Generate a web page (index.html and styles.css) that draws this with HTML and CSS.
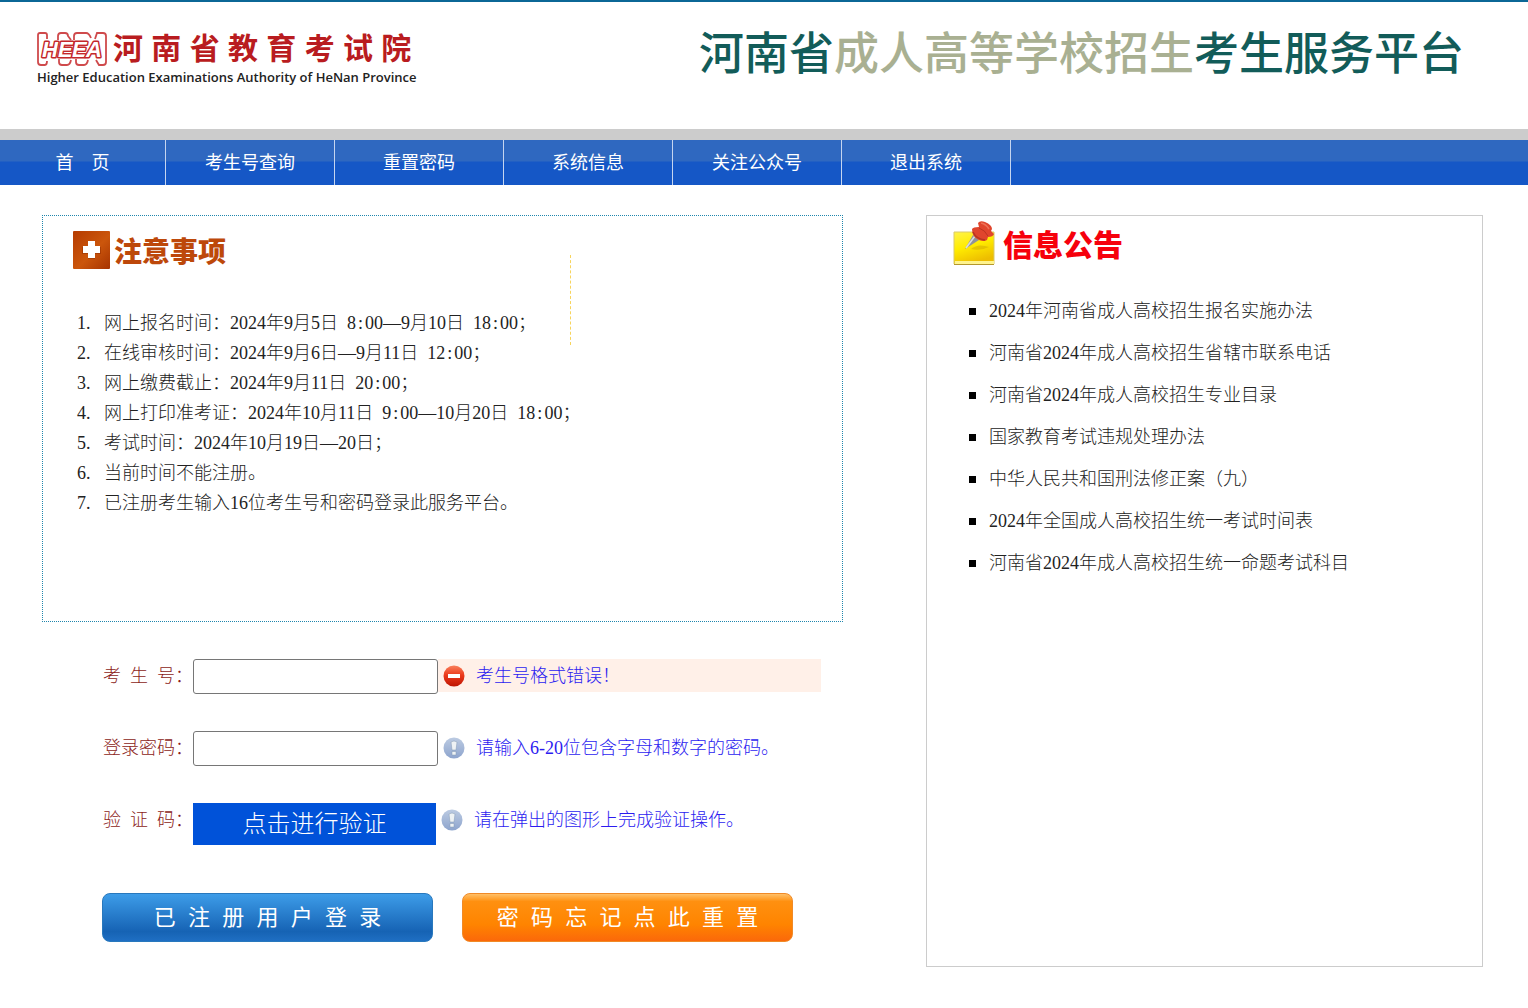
FILE: index.html
```html
<!DOCTYPE html>
<html lang="zh-CN">
<head>
<meta charset="utf-8">
<title>河南省成人高等学校招生考生服务平台</title>
<link rel="stylesheet" href="styles.css">
</head>
<body>
<header class="header">
  <div class="brand">
    <div class="brand-row">
      <svg class="brand-mark" viewBox="0 0 70 34" aria-label="HEEA">
        <g fill="none" stroke="#cf4a4c" stroke-width="1.8">
          <path d="M10 7V3Q10 1 8 1H3Q1 1 1 3V30Q1 33 4 33H8Q10 33 10 29"/>
          <path d="M58 7L60 1H66Q69 1 69 4V30Q69 33 66 33H62L59 28"/>
          <path d="M21 8V4Q21 1 24 1H28Q31 1 31 4L34 8M37 8V4Q37 1 40 1H49Q52 1 54 6M22 27V30Q22 33 25 33H30Q33 33 34 28M39 27V30Q39 33 42 33H47Q50 33 51 28"/>
        </g>
        <g class="brand-letters">
          <text x="5" y="25">H</text><text x="21" y="25">E</text><text x="35" y="25">E</text><text x="49" y="25">A</text>
        </g>
      </svg>
      <span class="brand-name">河 南 省 教 育 考 试 院</span>
    </div>
    <div class="brand-en">Higher Education Examinations Authority of HeNan Province</div>
  </div>
  <h1 class="title">河南省<span class="title-soft">成人高等学校招生</span>考生服务平台</h1>
</header>
<nav class="nav">
  <a href="#">首　页</a>
  <a href="#">考生号查询</a>
  <a href="#">重置密码</a>
  <a href="#">系统信息</a>
  <a href="#">关注公众号</a>
  <a href="#">退出系统</a>
</nav>
<main class="main">
  <div class="left">
    <section class="notice">
      <h2 class="notice-title">
        <svg class="notice-icon" viewBox="0 0 37 38" aria-hidden="true">
          <defs><linearGradient id="rust" x1="0" y1="0" x2="1" y2="1"><stop offset="0" stop-color="#b53b00"/><stop offset=".55" stop-color="#cb560c"/><stop offset="1" stop-color="#a63300"/></linearGradient></defs>
          <rect width="37" height="38" rx="1" fill="url(#rust)"/>
          <path d="M15 11h7v5h6v7h-6v5h-7v-5H9v-7h6z" fill="#8d2c00" opacity=".5"/>
          <path d="M15 10h7v5h5v7h-5v5h-7v-5h-5v-7h5z" fill="#fff"/>
        </svg>
        注意事项
      </h2>
      <ol class="notice-list">
        <li>网上报名时间：2024年9月5日&nbsp; 8<span class="colon">:</span>00—9月10日&nbsp; 18<span class="colon">:</span>00；</li>
        <li>在线审核时间：2024年9月6日—9月11日&nbsp; 12<span class="colon">:</span>00；</li>
        <li>网上缴费截止：2024年9月11日&nbsp; 20<span class="colon">:</span>00；</li>
        <li>网上打印准考证：2024年10月11日&nbsp; 9<span class="colon">:</span>00—10月20日&nbsp; 18<span class="colon">:</span>00；</li>
        <li>考试时间：2024年10月19日—20日；</li>
        <li>当前时间不能注册。</li>
        <li>已注册考生输入16位考生号和密码登录此服务平台。</li>
      </ol>
      <div class="divider"></div>
    </section>
    <form class="login">
      <div class="row">
        <label for="number">考&nbsp; 生&nbsp; 号：</label>
        <input id="number" type="text">
        <p class="tip tip-error">
          <svg class="tip-icon" viewBox="0 0 22 22" aria-hidden="true">
            <defs><linearGradient id="stop" x1="0" y1="0" x2="0" y2="1"><stop offset="0" stop-color="#f9805c"/><stop offset=".45" stop-color="#ec3a1c"/><stop offset="1" stop-color="#bd1503"/></linearGradient></defs>
            <circle cx="11" cy="11" r="10.5" fill="url(#stop)"/><rect x="5" y="9" width="12" height="4" fill="#fff"/>
          </svg>
          考生号格式错误！
        </p>
      </div>
      <div class="row">
        <label for="password">登录密码：</label>
        <input id="password" type="password">
        <p class="tip">
          <svg class="tip-icon" viewBox="0 0 22 22" aria-hidden="true">
            <defs><linearGradient id="info" x1="0" y1="0" x2="0" y2="1"><stop offset="0" stop-color="#bccbe2"/><stop offset="1" stop-color="#8da4cd"/></linearGradient></defs>
            <circle cx="11" cy="11" r="10.5" fill="url(#info)"/><path d="M8 5q3-2 6 0l-1 8H9zM9 14.500h4v3.500H9z" fill="#eef2f4" stroke="#8398b5" stroke-width=".5"/>
          </svg>
          请输入6-20位包含字母和数字的密码。
        </p>
      </div>
      <div class="row">
        <label for="verify">验&nbsp; 证&nbsp; 码：</label>
        <button id="verify" class="verify" type="button">点击进行验证</button>
        <p class="tip">
          <svg class="tip-icon" viewBox="0 0 22 22" aria-hidden="true">
            <circle cx="11" cy="11" r="10.5" fill="url(#info)"/><path d="M8 5q3-2 6 0l-1 8H9zM9 14.500h4v3.500H9z" fill="#eef2f4" stroke="#8398b5" stroke-width=".5"/>
          </svg>
          请在弹出的图形上完成验证操作。
        </p>
      </div>
      <div class="actions">
        <button class="action action-login" type="submit">已&nbsp; 注&nbsp; 册&nbsp; 用&nbsp; 户&nbsp; 登&nbsp; 录</button>
        <button class="action action-reset" type="button">密&nbsp; 码&nbsp; 忘&nbsp; 记&nbsp; 点&nbsp; 此&nbsp; 重&nbsp; 置</button>
      </div>
    </form>
  </div>
  <aside class="news">
    <h2 class="news-title">
      <svg class="news-icon" viewBox="0 0 44 46" aria-hidden="true">
        <defs><linearGradient id="note" x1="0" y1="0" x2=".4" y2="1"><stop offset="0" stop-color="#fff34a"/><stop offset=".5" stop-color="#ffec00"/><stop offset="1" stop-color="#edbd00"/></linearGradient></defs>
        <path d="M1 12H41V44H1Z" fill="url(#note)" stroke="#d9c96a"/>
        <path d="M2 41H41V44H2Z" fill="#fff48e"/>
        <path d="M1 44.500H41" stroke="#b5982c"/>
        <path d="M18 29Q25 23 36 27Q28 31 18 29Z" fill="#d0a900" opacity=".5"/>
        <path d="M12 29L20 15L26 20Z" fill="#8e9299"/><path d="M13 28L22 16" stroke="#d8dbe0" stroke-width="1.500"/>
        <path d="M19 9Q20 7 26 7L25 3Q27 0 32 2Q39 5 39 9L38 11L41 14Q40 17 35 17L34 20Q31 22 26 20Q19 17 19 9Z" fill="#e0452d"/>
        <path d="M26 8Q32 10 35 16" fill="none" stroke="#bc3320" stroke-width="1"/>
        <path d="M28 3Q33 4 36 9" fill="none" stroke="#ee7055" stroke-width="1.500"/>
        <path d="M20 12Q23 19 32 20" fill="none" stroke="#b53522" stroke-width="1.500"/>
      </svg>
      信息公告
    </h2>
    <ul class="news-list">
      <li><a href="#">2024年河南省成人高校招生报名实施办法</a></li>
      <li><a href="#">河南省2024年成人高校招生省辖市联系电话</a></li>
      <li><a href="#">河南省2024年成人高校招生专业目录</a></li>
      <li><a href="#">国家教育考试违规处理办法</a></li>
      <li><a href="#">中华人民共和国刑法修正案（九）</a></li>
      <li><a href="#">2024年全国成人高校招生统一考试时间表</a></li>
      <li><a href="#">河南省2024年成人高校招生统一命题考试科目</a></li>
    </ul>
  </aside>
</main>
</body>
</html>
```
FILE: styles.css
```css
* { box-sizing: border-box; }

body {
  margin: 0;
  background: #fff;
  color: #222;
  font-family: "Liberation Serif", "Noto Sans CJK SC", serif;
  font-size: 18px;
  font-weight: 300;
  line-height: 30px;
}

h1, h2, p, ol, ul { margin: 0; padding: 0; }
ol, ul { list-style: none; }
a { color: inherit; text-decoration: none; }
button, input { font: inherit; }

.header {
  display: flex;
  justify-content: space-between;
  align-items: flex-start;
  height: 140px;
  padding: 28px 64px 0 37px;
  border-top: 2px solid #0b6796;
  border-bottom: 11px solid #ccc;
}

.brand-row { display: flex; align-items: center; gap: 6px; height: 38px; }
.brand-mark { width: 70px; height: 34px; }
.brand-letters {
  fill: #fff;
  stroke: #c4282b;
  stroke-width: 3px;
  stroke-linejoin: round;
  paint-order: stroke;
  font-family: "Liberation Sans", sans-serif;
  font-size: 22px;
  font-style: italic;
  font-weight: 700;
}
.brand-name {
  color: #b91c20;
  font-family: "Liberation Sans", "Noto Sans CJK SC", sans-serif;
  font-size: 30px;
  font-weight: 700;
  white-space: nowrap;
}
.brand-en {
  color: #222;
  font-family: "Open Sans", sans-serif;
  font-size: 13px;
  font-weight: 600;
  line-height: 18px;
}
.title {
  color: #125c59;
  font-family: "Noto Sans CJK SC", sans-serif;
  font-size: 45px;
  font-weight: 500;
  line-height: 42px;
  white-space: nowrap;
}
.title-soft { color: #a9b092; }

.nav {
  display: flex;
  height: 45px;
  background: linear-gradient(#2f68c0 0 21px, #1557c6 22px 100%);
  color: #fff;
  font-weight: 400;
  line-height: 47px;
}
.nav a { width: 169px; border-right: 1px solid #c5d5f0; text-align: center; }
.nav a:first-child { width: 166px; }

.main {
  display: grid;
  grid-template-columns: 801fr 557fr;
  gap: 83px;
  padding: 30px 45px 41px 42px;
}

.notice {
  position: relative;
  height: 407px;
  padding: 16px 30px;
  border: 1px dotted #1f86ad;
}
.notice-title {
  display: flex;
  align-items: center;
  gap: 4px;
  height: 36px;
  color: #bd480a;
  font-family: "Noto Sans CJK SC", sans-serif;
  font-size: 28px;
  font-weight: 900;
}
.notice-icon { width: 37px; height: 38px; }
.notice-list { padding: 40px 0 0 31px; counter-reset: notice; }
.notice-list li { counter-increment: notice; }
.notice-list li::before {
  content: counter(notice) ".";
  display: inline-block;
  width: 27px;
  margin-left: -27px;
}
.colon { padding: 0 2px; }
.divider {
  position: absolute;
  top: 39px;
  left: 527px;
  height: 90px;
  border-left: 1px dashed #f7d45c;
}

.login { display: grid; gap: 37px; padding: 37px 22px 25px 60px; }
.row { display: flex; align-items: flex-start; height: 35px; }
.row label { flex: none; width: 91px; padding-left: 1px; color: #8b1c20; line-height: 34px; white-space: nowrap; }
.row input {
  width: 245px;
  height: 35px;
  padding: 0 6px;
  border: 1px solid #767676;
  border-radius: 3px;
  background: #fff;
}
.tip {
  display: flex;
  flex: 1;
  align-items: center;
  gap: 11px;
  height: 33px;
  padding-left: 5px;
  color: #2c1cf0;
}
.tip-error { background: #fff0e8; }
.tip-icon { width: 22px; height: 22px; }
.verify {
  width: 243px;
  height: 42px;
  padding: 0;
  border: 0;
  background: #0052d9;
  color: #fff;
  font-size: 24px;
  line-height: 40px;
}

.actions { display: flex; gap: 29px; padding-top: 18px; }
.action {
  width: 331px;
  height: 49px;
  padding: 0;
  border: 1px solid;
  border-radius: 8px;
  color: #fff;
  font-family: "Liberation Sans", "Noto Sans CJK SC", sans-serif;
  font-size: 22px;
  font-weight: 400;
  line-height: 46px;
}
.action-login { border-color: #2878bd; background: linear-gradient(#3d9ce8, #1663b4 80%, #1f6fc3); }
.action-reset { border-color: #f08a27; background: linear-gradient(#ffc068, #ff9010 16%, #ff8400 65%, #fb680a); }

.news { padding: 6px 26px; border: 1px solid #ccc; }
.news-title {
  display: flex;
  align-items: center;
  gap: 6px;
  height: 42px;
  color: #f6000c;
  font-family: "Noto Sans CJK SC", sans-serif;
  font-size: 30px;
  font-weight: 900;
}
.news-icon { width: 44px; height: 46px; }
.news-list { padding: 26px 0 0 16px; line-height: 42px; }
.news-list li { display: flex; align-items: center; gap: 13px; }
.news-list li::before { content: ""; width: 7px; height: 7px; background: #000; }
```
